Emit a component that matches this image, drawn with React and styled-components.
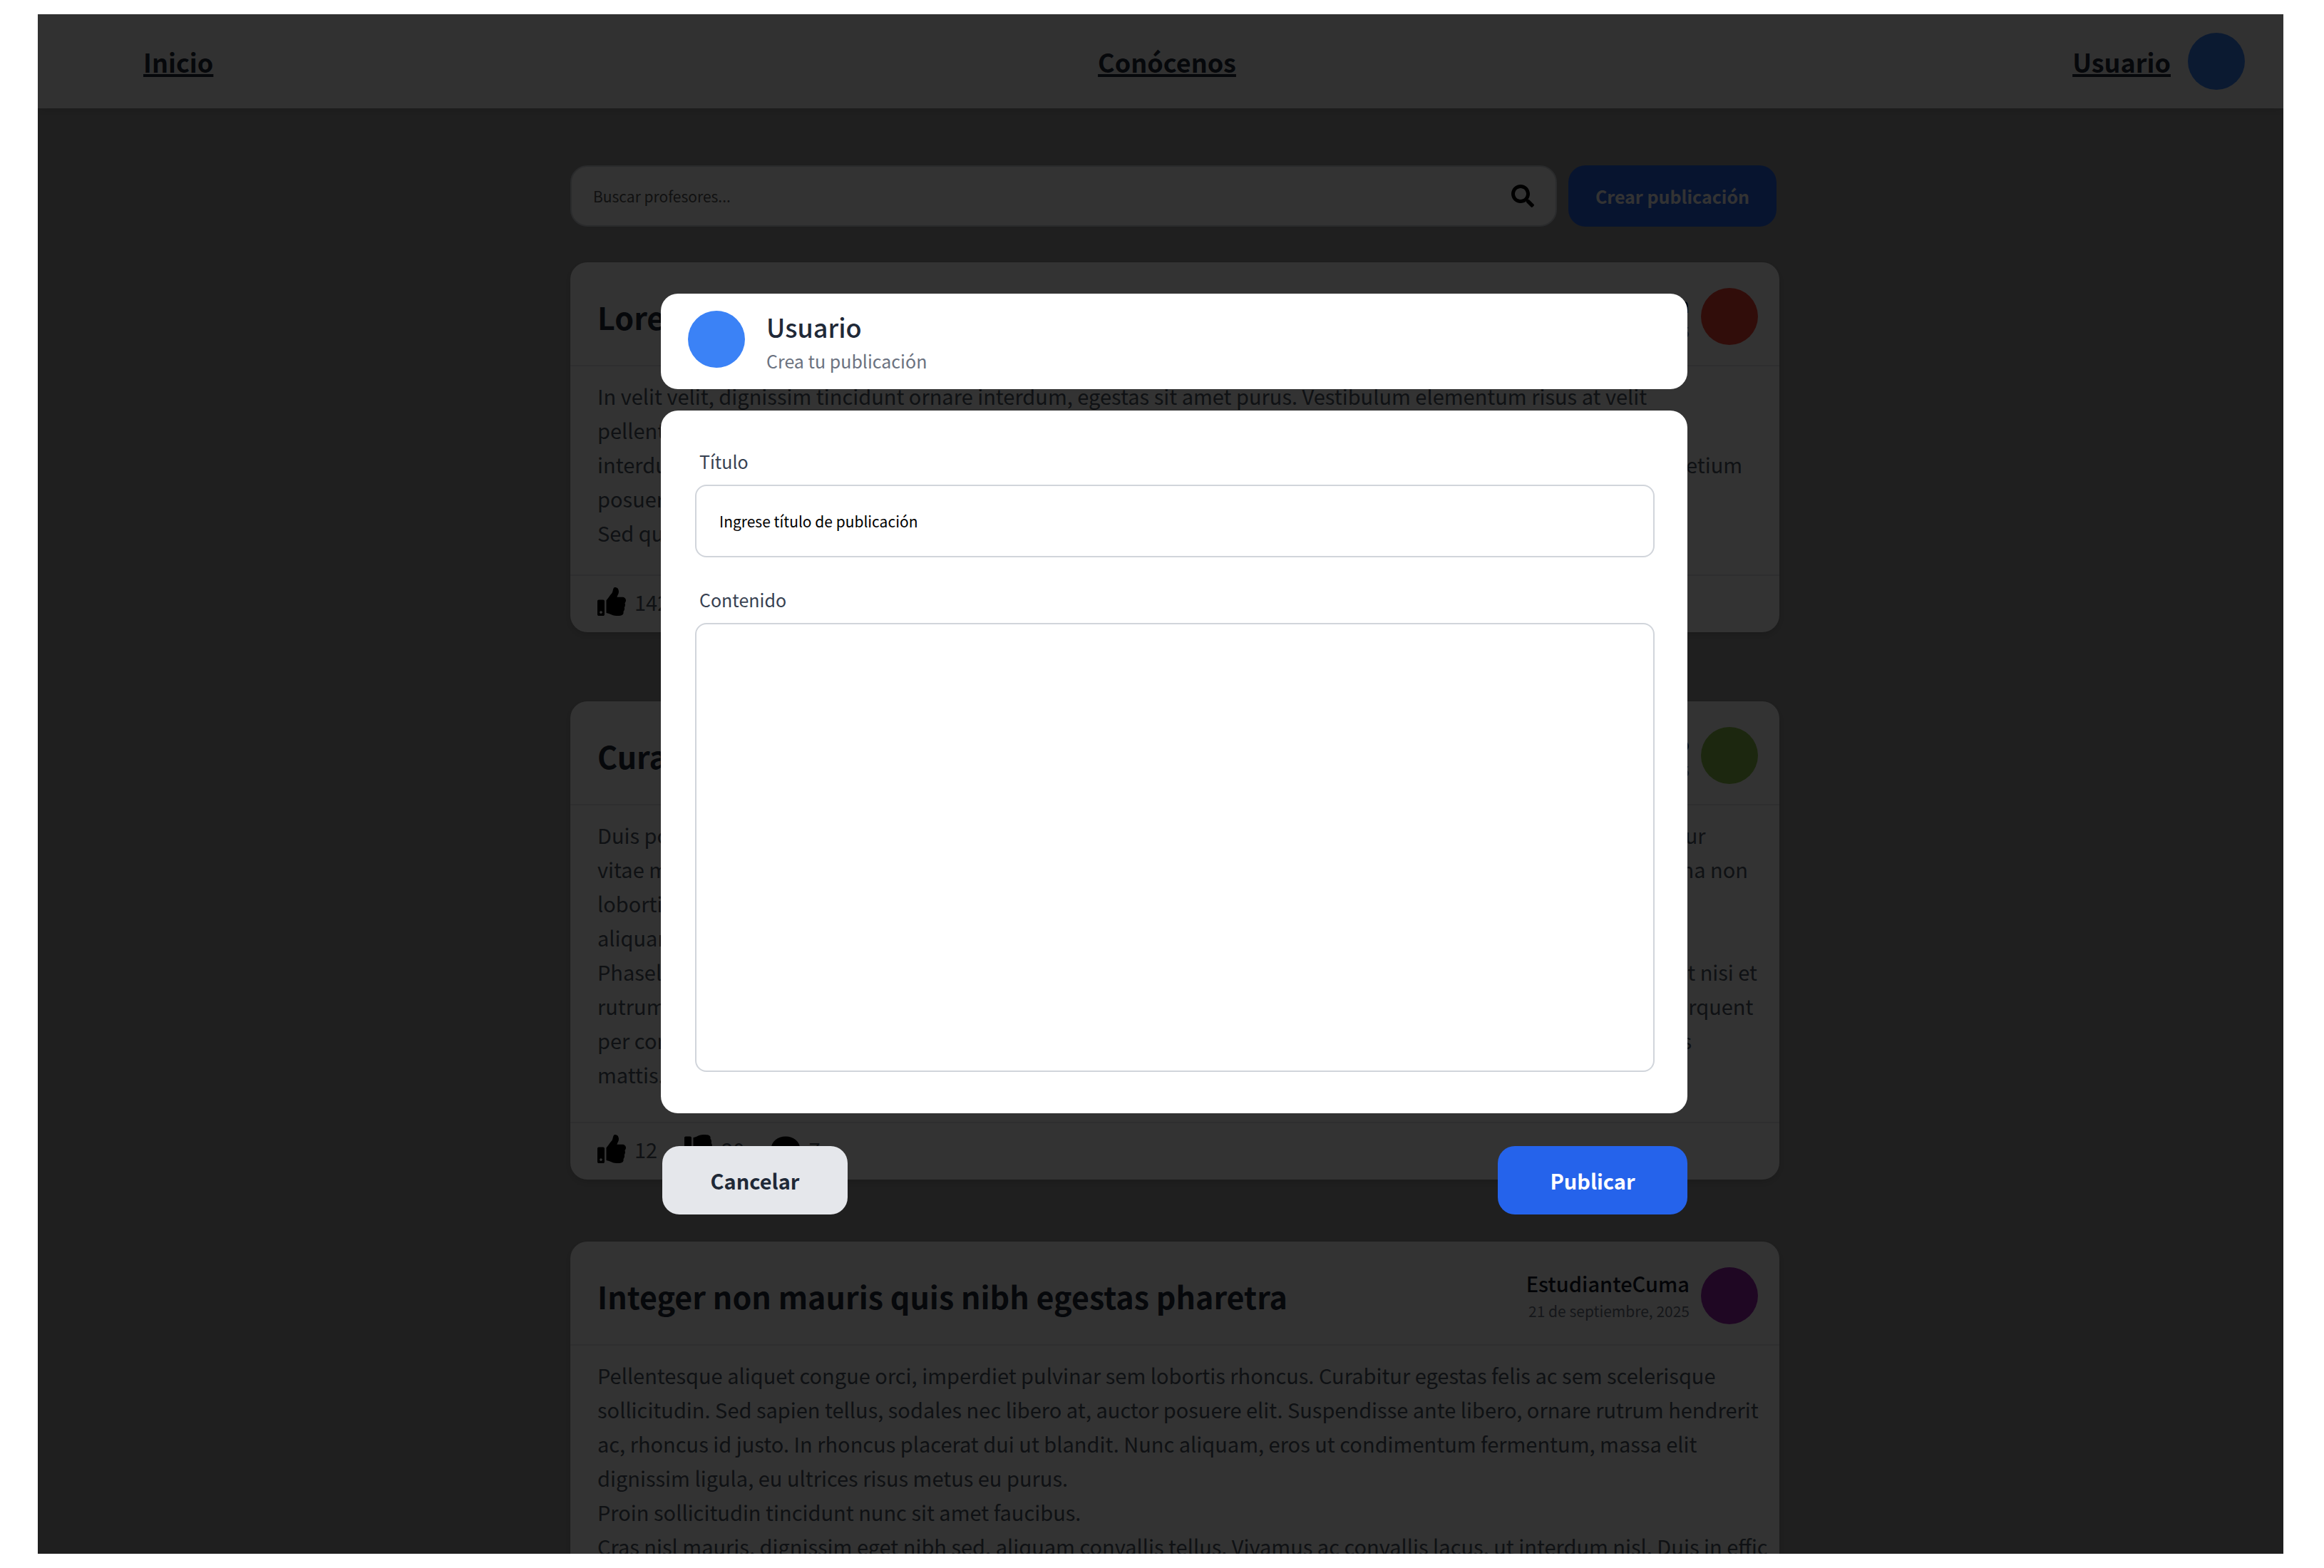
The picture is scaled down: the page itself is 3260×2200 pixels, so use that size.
import React from "react";
import styled, { createGlobalStyle } from "styled-components";
import { FaSearch, FaThumbsUp, FaThumbsDown, FaComment } from "react-icons/fa";

const GlobalStyle = createGlobalStyle`
  *, *::before, *::after { box-sizing: border-box; }
  body {
    margin: 0;
    background: #ffffff;
    font-family: "Noto Sans CJK JP", "Noto Sans", sans-serif;
    color: #1f2937;
  }
  button, input, textarea { font: inherit; }
  h1, h2, p { margin: 0; }
`;

const Screen = styled.div`
  position: relative;
  height: calc(100vh - 40px);
  margin: 20px 57px 20px 53px;
  overflow: hidden;
  background: #9c9c9c;
`;

const TopBar = styled.header`
  display: grid;
  grid-template-columns: 1fr auto 1fr;
  align-items: center;
  height: 132px;
  padding: 0 36px 0 54px;
  background: #f5f5f5;
  box-shadow: 0 4px 12px rgba(0, 0, 0, 0.12);
`;

const NavStart = styled.div`
  padding-left: 94px;
`;

const NavEnd = styled.div`
  display: flex;
  align-items: center;
  justify-content: flex-end;
  gap: 24px;
  padding-right: 18px;
`;

const NavLink = styled.a`
  color: #1f2937;
  font-size: 36px;
  font-weight: 700;
  line-height: 48px;
  text-decoration: underline;
  text-decoration-thickness: 4px;
  text-decoration-skip-ink: none;
  text-underline-offset: 2px;
`;

const Avatar = styled.span`
  flex: none;
  width: 80px;
  height: 80px;
  border-radius: 50%;
  background: ${(p) => p.$color};
`;

const Main = styled.main`
  display: flex;
  flex-direction: column;
  align-items: center;
  gap: 50px;
  padding: 80px 0 0 40px;
`;

const SearchRow = styled.form`
  display: flex;
  gap: 16px;
  width: 100%;
  max-width: 1696px;
  padding-right: 4px;
`;

const SearchField = styled.label`
  flex: 1;
  display: flex;
  align-items: center;
  height: 86px;
  padding: 0 30px;
  border: 2px solid #d1d5db;
  border-radius: 24px;
  background: #ffffff;
  color: #000000;
  font-size: 32px;
`;

const SearchInput = styled.input`
  flex: 1;
  padding: 0;
  border: 0;
  outline: 0;
  background: transparent;
  font-size: 21px;
  &::placeholder { color: #555555; opacity: 1; }
`;

const CreateButton = styled.button`
  width: 292px;
  border: 0;
  border-radius: 24px;
  background: #2563eb;
  color: #ffffff;
  font-size: 25px;
  font-weight: 700;
`;

const Feed = styled.div`
  width: 100%;
  max-width: 1696px;
`;

const Card = styled.article`
  margin-bottom: ${(p) => p.$after}px;
  border-radius: 24px;
  background: #ffffff;
  box-shadow: 0 4px 12px rgba(0, 0, 0, 0.15);
`;

const CardHeader = styled.header`
  display: flex;
  align-items: center;
  gap: 16px;
  height: 146px;
  padding: 8px 30px 0 38px;
  border-bottom: 2px solid #e5e7eb;
`;

const CardTitle = styled.h2`
  flex: 1;
  font-size: 43px;
  font-weight: 700;
  line-height: 64px;
  white-space: nowrap;
`;

const Byline = styled.div`
  text-align: right;
`;

const Author = styled.p`
  color: #111827;
  font-size: 29px;
  font-weight: 500;
  line-height: 42px;
`;

const PostDate = styled.p`
  color: #6b7280;
  font-size: 21px;
  line-height: 36px;
`;

const CardBody = styled.p`
  padding: 17px 0 ${(p) => p.$bottom}px 38px;
  color: #4b5563;
  font-size: 29px;
  line-height: 48px;
  white-space: pre;
`;

const CardFooter = styled.footer`
  display: flex;
  align-items: center;
  gap: 38px;
  height: 81px;
  padding: 0 38px 8px;
  border-top: 2px solid #e5e7eb;
`;

const Reaction = styled.span`
  display: flex;
  align-items: center;
  gap: 12px;
  color: #4b5563;
  font-size: 29px;
  line-height: 48px;
  svg { color: #000000; font-size: 40px; }
`;

const Overlay = styled.div`
  position: absolute;
  inset: 0;
  display: flex;
  justify-content: center;
  align-items: flex-start;
  padding: 392px 0 0 38px;
  background: rgba(0, 0, 0, 0.8);
`;

const Dialog = styled.form`
  width: 100%;
  max-width: 1440px;
`;

const DialogHeader = styled.header`
  display: flex;
  align-items: center;
  gap: 30px;
  height: 134px;
  margin-bottom: 30px;
  padding: 0 38px 6px;
  border-radius: 24px;
  background: #ffffff;
`;

const DialogTitle = styled.h1`
  font-size: 36px;
  font-weight: 500;
  line-height: 60px;
`;

const DialogHint = styled.p`
  color: #6b7280;
  font-size: 25px;
  line-height: 36px;
`;

const Panel = styled.div`
  display: flex;
  flex-direction: column;
  gap: 41px;
  padding: 53px 46px 58px 48px;
  border-radius: 24px;
  background: #ffffff;
`;

const Field = styled.div`
  display: flex;
  flex-direction: column;
  gap: 15px;
`;

const FieldLabel = styled.label`
  padding-left: 6px;
  color: #374151;
  font-size: 25px;
  line-height: 36px;
`;

const TitleInput = styled.input`
  height: 102px;
  padding: 0 32px;
  border: 2px solid #d1d5db;
  border-radius: 16px;
  outline: 0;
  background: #ffffff;
  font-size: 21px;
  &::placeholder { color: #000000; opacity: 1; }
`;

const ContentInput = styled.textarea`
  height: 630px;
  padding: 24px 32px;
  border: 2px solid #d1d5db;
  border-radius: 16px;
  outline: 0;
  resize: none;
  background: #ffffff;
  font-size: 21px;
`;

const Actions = styled.div`
  display: flex;
  justify-content: space-between;
  padding: 46px 0 0 2px;
`;

const ActionButton = styled.button`
  width: ${(p) => (p.$primary ? 266 : 260)}px;
  height: 96px;
  border: 0;
  border-radius: 24px;
  background: ${(p) => (p.$primary ? "#2563eb" : "#e5e7eb")};
  color: ${(p) => (p.$primary ? "#ffffff" : "#1f2937")};
  font-size: 29px;
  font-weight: 700;
`;

const posts = [
  {
    title: "Lorem ipsum dolor sit amet",
    author: "EstudianteUcm",
    date: "23 de septiembre, 2025",
    color: "#f44336",
    after: 97,
    bottom: 35,
    likes: 142,
    dislikes: 12,
    comments: 8,
    lines: [
      "In velit velit, dignissim tincidunt ornare interdum, egestas sit amet purus. Vestibulum elementum risus at velit",
      "pellentesque, vitae tincidunt neque faucibus. Donec vel nisl vitae sapien luctus dictum.",
      "interdum et malesuada fames ac ante ipsum primis in faucibus. Nullam ac tellus vel erat urna lacinia bibendum pretium",
      "posuere. Aliquam erat volutpat. Integer non nibh et lacus tempus.",
      "Sed quis tellus vel mi dapibus porta.",
    ],
  },
  {
    title: "Curabitur vitae massa",
    author: "Anonimo",
    date: "22 de septiembre, 2025",
    color: "#8bc34a",
    after: 87,
    bottom: 43,
    likes: 12,
    dislikes: 20,
    comments: 7,
    lines: [
      "Duis posuere nisl sed tellus mattis, vitae posuere ligula egestas. Aenean non nibh et lacus arcu elementum curabitur",
      "vitae massa eget turpis luctus dapibus. Sed fringilla tortor nec velit aliquet, quam tempor lectus eget dignissim urna non",
      "lobortis. Nunc vel ligula at arcu gravida placerat.",
      "aliquam. Integer at sapien in lectus tempus porta.",
      "Phasellus consequat nunc a nibh tristique, vel ornare lectus faucibus. Mauris sagittis dolor vel ante lacinia, nec erat nisi et",
      "rutrum aliquam, neque justo gravida velit, eget luctus sapien arcu vel ante. Class aptent taciti sociosqu ad litora torquent",
      "per conubia nostra, per inceptos himenaeos. Donec lacinia turpis a tellus gravida, nec ultrices arcu mauris dapibus",
      "mattis.",
    ],
  },
  {
    title: "Integer non mauris quis nibh egestas pharetra",
    author: "EstudianteCuma",
    date: "21 de septiembre, 2025",
    color: "#9c27b0",
    after: 0,
    bottom: 43,
    likes: 30,
    dislikes: 4,
    comments: 5,
    lines: [
      "Pellentesque aliquet congue orci, imperdiet pulvinar sem lobortis rhoncus. Curabitur egestas felis ac sem scelerisque",
      "sollicitudin. Sed sapien tellus, sodales nec libero at, auctor posuere elit. Suspendisse ante libero, ornare rutrum hendrerit",
      "ac, rhoncus id justo. In rhoncus placerat dui ut blandit. Nunc aliquam, eros ut condimentum fermentum, massa elit",
      "dignissim ligula, eu ultrices risus metus eu purus.",
      "Proin sollicitudin tincidunt nunc sit amet faucibus.",
      "Cras nisl mauris, dignissim eget nibh sed, aliquam convallis tellus. Vivamus ac convallis lacus, ut interdum nisl. Duis in effic",
    ],
  },
];

function Post({ post }) {
  return (
    <Card $after={post.after}>
      <CardHeader>
        <CardTitle>{post.title}</CardTitle>
        <Byline>
          <Author>{post.author}</Author>
          <PostDate>{post.date}</PostDate>
        </Byline>
        <Avatar $color={post.color} />
      </CardHeader>
      <CardBody $bottom={post.bottom}>{post.lines.join("\n")}</CardBody>
      <CardFooter>
        <Reaction><FaThumbsUp />{post.likes}</Reaction>
        <Reaction><FaThumbsDown />{post.dislikes}</Reaction>
        <Reaction><FaComment />{post.comments}</Reaction>
      </CardFooter>
    </Card>
  );
}

export default function App() {
  return (
    <>
      <GlobalStyle />
      <Screen>
        <TopBar>
          <NavStart><NavLink href="#inicio">Inicio</NavLink></NavStart>
          <NavLink href="#conocenos">Conócenos</NavLink>
          <NavEnd>
            <NavLink href="#usuario">Usuario</NavLink>
            <Avatar $color="#3b82f6" />
          </NavEnd>
        </TopBar>
        <Main>
          <SearchRow>
            <SearchField>
              <SearchInput type="text" aria-label="Buscar profesores" placeholder="Buscar profesores..." />
              <FaSearch />
            </SearchField>
            <CreateButton type="button">Crear publicación</CreateButton>
          </SearchRow>
          <Feed>
            {posts.map((post) => <Post key={post.title} post={post} />)}
          </Feed>
        </Main>
        <Overlay>
          <Dialog role="dialog" aria-modal="true" aria-labelledby="dialog-title">
            <DialogHeader>
              <Avatar $color="#3b82f6" />
              <div>
                <DialogTitle id="dialog-title">Usuario</DialogTitle>
                <DialogHint>Crea tu publicación</DialogHint>
              </div>
            </DialogHeader>
            <Panel>
              <Field>
                <FieldLabel htmlFor="titulo">Título</FieldLabel>
                <TitleInput id="titulo" type="text" placeholder="Ingrese título de publicación" />
              </Field>
              <Field>
                <FieldLabel htmlFor="contenido">Contenido</FieldLabel>
                <ContentInput id="contenido" />
              </Field>
            </Panel>
            <Actions>
              <ActionButton type="button">Cancelar</ActionButton>
              <ActionButton type="button" $primary>Publicar</ActionButton>
            </Actions>
          </Dialog>
        </Overlay>
      </Screen>
    </>
  );
}
